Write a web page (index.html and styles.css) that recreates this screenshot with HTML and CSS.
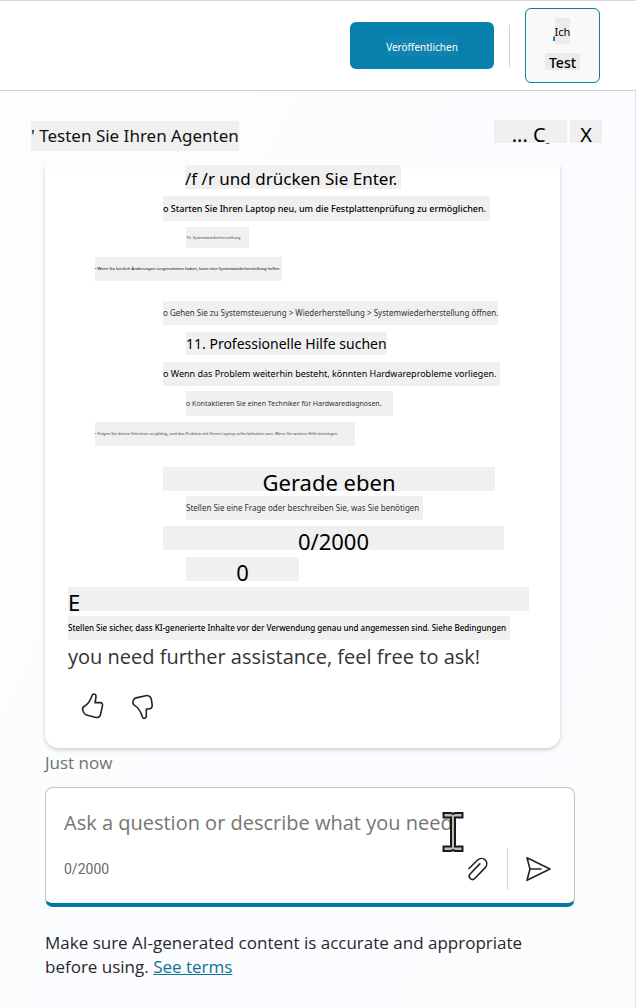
FILE: index.html
```html
<!DOCTYPE html>
<html lang="de">
<head>
<meta charset="utf-8">
<meta name="viewport" content="width=device-width, initial-scale=1">
<title>Testen Sie Ihren Agenten</title>
<link rel="stylesheet" href="styles.css">
</head>
<body>
<header class="topbar">
  <button class="publish" type="button"><span class="publish-label">Veröffentlichen</span></button>
  <span class="topbar-divider"></span>
  <button class="test" type="button">
    <span class="test-icon">Ich</span>
    <span class="test-label">Test</span>
  </button>
</header>
<main class="panel">
  <div class="panel-head">
    <h1 class="panel-title">' Testen Sie Ihren Agenten</h1>
    <div class="panel-actions">
      <button class="head-button more" type="button">... C<span class="tail">_</span></button>
      <button class="head-button close" type="button">X</button>
    </div>
  </div>
  <article class="message">
    <p class="strip lead">/f /r und drücken Sie Enter.</p>
    <p class="strip outer bold-note restart">o Starten Sie Ihren Laptop neu, um die Festplattenprüfung zu ermöglichen.</p>
    <p class="strip inner micro step">10. Systemwiederherstellung</p>
    <p class="strip far micro dark recent">• Wenn Sie kürzlich Änderungen vorgenommen haben, kann eine Systemwiederherstellung helfen.</p>
    <p class="strip outer note control">o Gehen Sie zu Systemsteuerung &gt; Wiederherstellung &gt; Systemwiederherstellung öffnen.</p>
    <p class="strip inner heading">11. Professionelle Hilfe suchen</p>
    <p class="strip outer bold-note hardware">o Wenn das Problem weiterhin besteht, könnten Hardwareprobleme vorliegen.</p>
    <p class="strip inner technician">o Kontaktieren Sie einen Techniker für Hardwarediagnosen.</p>
    <p class="strip far micro further">• Folgen Sie diesen Schritten sorgfältig, und das Problem mit Ihrem Laptop sollte behoben sein. Wenn Sie weitere Hilfe benötigen</p>
    <p class="strip outer big time">Gerade eben</p>
    <p class="strip inner small ask">Stellen Sie eine Frage oder beschreiben Sie, was Sie benötigen</p>
    <p class="strip outer big count">0/2000</p>
    <p class="strip inner big zero">0</p>
    <p class="strip big letter">E</p>
    <p class="strip small dark terms">Stellen Sie sicher, dass KI-generierte Inhalte vor der Verwendung genau und angemessen sind. Siehe Bedingungen</p>
    <p class="closing" lang="en">you need further assistance, feel free to ask!</p>
    <div class="feedback">
      <button class="icon-button" type="button" aria-label="Like">
        <svg width="26" height="30" viewBox="0 0 26 30"><path d="M12.200 4.300c.8-2 3.800-1.600 3.800.8 0 2.600-.6 4.400-1 6.500h5.200c1.800 0 2.600 1.300 2.300 2.900l-2 9c-.5 2.300-2.300 3.500-4.600 2.900l-9.500-2.500c-1.400-.4-2-1.100-2.600-2.400l-1-2.200c-.6-1.700.1-3.200 1.600-4 4.300-2.300 6.300-6.700 7.800-11z"/></svg>
      </button>
      <button class="icon-button" type="button" aria-label="Dislike">
        <svg width="26" height="30" viewBox="0 0 26 30"><path d="M12.600 26.200c.6 1.700 3.600 1.500 3.700-.8 0-2.800 0-5.200.1-7.400h1.900c2.700 0 4.100-1.600 3.900-3.900l-.8-5.500c-.5-2.800-2.900-4.500-5.700-3.900l-9.600 2.200c-1.600.4-2.600 1.100-2.900 2.700l-.3 1.600c-.2 1.700.5 2.700 2 3.400 4.300 2.100 6.300 7.500 7.700 11.600z"/></svg>
      </button>
    </div>
  </article>
  <p class="stamp" lang="en">Just now</p>
  <form class="composer" lang="en">
    <input class="question" type="text" aria-label="Question" placeholder="Ask a question or describe what you need">
    <div class="composer-row">
      <span class="counter">0/2000</span>
      <button class="icon-button attach" type="button" aria-label="Attach file">
        <svg width="24" height="26" viewBox="0 0 24 26"><path d="M3 12.500l8.300-8.300c2.600-2.500 6-2.100 7.900-.3 2 2 2.200 5.300 0 7.700L9 22.200c-1.500 1.600-3.500 1.500-4.800.3-1.300-1.300-1.300-3.300.1-4.800l9.500-9.800"/></svg>
      </button>
      <span class="composer-divider"></span>
      <button class="icon-button send" type="submit" aria-label="Send">
        <svg width="28" height="28" viewBox="0 0 28 28"><path d="M3 2.700l23 11.300L3 25.300l3-11.300zM6 14h11"/></svg>
      </button>
    </div>
    <svg class="cursor" width="22" height="42" viewBox="0 0 22 42"><path class="cursor-edge" d="M1.500 2h7.500l2 1 2-1h7.500v4.500H13v29h7.500V40H13l-2-1-2 1H1.500v-4.500H9v-29H1.500z"/><path class="cursor-core" d="M11 5v32"/></svg>
  </form>
  <p class="disclaimer" lang="en">Make sure AI-generated content is accurate and appropriate before using. <a class="link" href="#">See terms</a></p>
</main>
</body>
</html>
```
FILE: styles.css
```css
* { box-sizing: border-box; }
body {
  margin: 0;
  min-height: 100vh;
  display: flex;
  flex-direction: column;
  font-family: "Noto Sans", sans-serif;
  color: #000;
  background: #fff;
}
p, h1 { margin: 0; font-weight: 400; }
button { font-family: inherit; padding: 0; color: inherit; cursor: pointer; }

.topbar {
  display: flex;
  justify-content: flex-end;
  align-items: center;
  gap: 15px;
  height: 91px;
  padding-right: 36px;
  border-top: 1px solid #d9d9d9;
  border-bottom: 1px solid #d1d1d1;
}
.publish {
  width: 144px;
  height: 47px;
  padding-top: 3px;
  border: 0;
  border-radius: 6px;
  background: #0880ae;
  color: #fff;
}
.publish-label {
  display: inline-block;
  background: #1183af;
  font-size: 10px;
  line-height: 20px;
}
.topbar-divider { width: 1px; height: 42px; background: #d1d1d1; }
.test {
  display: flex;
  flex-direction: column;
  align-items: center;
  gap: 9px;
  width: 75px;
  height: 75px;
  padding-top: 9px;
  border: 1px solid #0880ae;
  border-radius: 6px;
  background: #faf9f8;
}
.test-icon {
  position: relative;
  height: 26px;
  background: #ebebeb;
  font-size: 11px;
  line-height: 27px;
}
.test-icon::before {
  content: "";
  position: absolute;
  left: -2px;
  top: 18px;
  width: 2px;
  height: 5px;
  border-radius: 2px 0 0 0;
  background: #0880ae;
}
.test-label {
  height: 17px;
  padding: 0 4px;
  background: #ebebeb;
  font-size: 14px;
  font-weight: 500;
  line-height: 20px;
}

.panel {
  flex: 1;
  padding: 29px 60px 29px 45px;
  border-right: 1px solid #e4e4e6;
  background: linear-gradient(115deg, #fdfdfd, #fbfcff 50%, #fbfcfe);
}
.panel-head {
  display: flex;
  justify-content: space-between;
  margin: 0 -27px 14px -14px;
}
.panel-title {
  margin-top: 1px;
  background: #f0f0f0;
  font-size: 17px;
  line-height: 30px;
  color: #111;
}
.panel-actions { display: flex; gap: 3px; }
.head-button {
  height: 23px;
  border: 0;
  background: #efefef;
  font-size: 20px;
  line-height: 30px;
}
.more { width: 73px; }
.tail { font-size: 8px; }
.close { width: 32px; }

.message {
  display: flex;
  flex-direction: column;
  align-items: flex-start;
  margin-right: 15px;
  padding: 0 23px 27px;
  border-radius: 0 0 14px 14px;
  background: linear-gradient(#fff, #fff) no-repeat 0 4px;
  box-shadow: 0 2px 4px #0000002e;
  clip-path: inset(0 -8px -8px -8px);
}
.strip {
  max-width: 100%;
  background: #f0f0f0;
  line-height: 24px;
  white-space: nowrap;
}
.outer { margin-left: 95px; }
.inner { margin-left: 118px; }
.far { margin-left: 27px; }
.lead { height: 24px; margin-left: 117px; padding-right: 4px; font-size: 17px; line-height: 28px; }
.note { font-size: 8px; }
.bold-note { font-size: 9px; font-weight: 500; line-height: 25px; }
.small { font-size: 8px; color: #333; }
.micro { font-size: 4px; color: #444; }
.strip.dark { color: #000; }
.big { height: 24px; font-size: 22px; line-height: 30px; text-align: center; }
.restart { margin-top: 7px; padding-right: 4px; }
.step { width: 63px; margin-top: 6px; line-height: 21px; }
.recent { width: 187px; margin-top: 9px; }
.control { margin-top: 20px; color: #333; }
.heading { margin-top: 7px; font-size: 14px; line-height: 23px; }
.hardware { margin-top: 7px; font-weight: 400; line-height: 24px; padding-right: 4px; }
.technician { min-width: 207px; margin-top: 5px; font-size: 7px; line-height: 25px; color: #333; }
.further { width: 260px; margin-top: 6px; }
.time { width: 332px; margin-top: 21px; }
.ask { margin-top: 5px; padding-right: 4px; }
.count { width: 341px; margin-top: 6px; }
.zero { width: 113px; margin-top: 7px; }
.letter { width: 461px; margin-top: 6px; text-align: left; }
.terms { margin-top: 5px; padding-right: 4px; font-weight: 500; }
.closing {
  margin-top: 2px;
  font-family: "Open Sans", sans-serif;
  font-size: 20px;
  line-height: 30px;
  color: #333;
  white-space: nowrap;
}
.feedback { display: flex; gap: 24px; margin: 19px 0 0 12px; }
.icon-button { display: flex; border: 0; background: none; }
.icon-button path {
  fill: none;
  stroke: #242424;
  stroke-width: 1.6;
  stroke-linecap: round;
  stroke-linejoin: round;
}

.stamp {
  margin-top: 3px;
  font-family: "Open Sans", sans-serif;
  font-size: 17px;
  line-height: 24px;
  color: #707070;
}
.composer {
  position: relative;
  margin-top: 12px;
  padding: 20px 22px 13px 18px;
  border: 1px solid #c4c4c4;
  border-bottom: 4px solid #0078a3;
  border-radius: 8px;
  background: #fff;
}
.question {
  display: block;
  width: 100%;
  padding: 0;
  border: 0;
  outline: 0;
  background: none;
  font-family: "Open Sans", sans-serif;
  font-size: 20px;
  line-height: 30px;
  color: #333;
}
.question::placeholder { color: #757575; opacity: 1; }
.composer-row { display: flex; align-items: center; margin-top: 10px; }
.counter { flex: 1; font-family: Roboto, sans-serif; font-size: 14px; color: #6a6a6a; }
.composer-divider { width: 1px; height: 42px; margin: 0 16px 0 17px; background: #d6d6d6; }
.cursor { position: absolute; top: 23px; right: 110px; }
.cursor-edge { fill: #bbb; stroke: #1a1a1a; stroke-width: 2; }
.cursor-core { fill: none; stroke: #bbb; stroke-width: 2; }
.disclaimer {
  margin-top: 24px;
  font-family: "Open Sans", sans-serif;
  font-size: 17px;
  line-height: 24px;
  color: #292929;
}
.link { color: #0f7391; }
```
